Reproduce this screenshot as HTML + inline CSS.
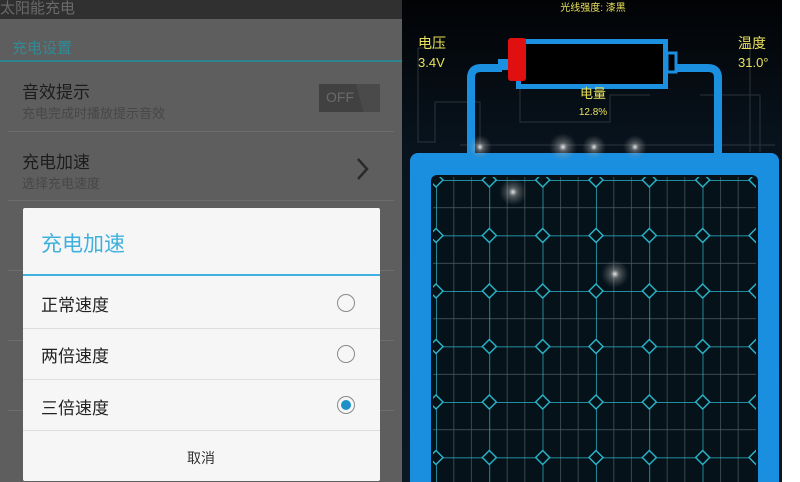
<!DOCTYPE html>
<html><head><meta charset="utf-8"><style>
*{margin:0;padding:0;box-sizing:border-box}
body{width:800px;height:482px;overflow:hidden;background:#fff;position:relative;font-family:"Liberation Sans","Noto Sans CJK SC",sans-serif}
#left{position:absolute;left:0;top:0;width:402px;height:482px;background:#5e5e5e}
.t{position:absolute;white-space:nowrap}
.sep{position:absolute;left:8px;width:386px;height:1px;background:#6e6e6e}
#dlg{position:absolute;left:23px;top:208px;width:357px;height:273px;background:#f6f6f6;border-radius:2px}
.row{position:absolute;left:0;width:357px;height:1px;background:#dedede}
.radio{position:absolute;left:314px;width:18px;height:18px;border:1.5px solid #8a8a8a;border-radius:50%}
</style></head><body>
<div id="left">
 <div style="position:absolute;left:0;top:0;width:402px;height:19px;background:#303030"></div>
 <div class="t" style="left:0;top:-3px;font-size:15px;color:#6a6a6a">太阳能充电</div>
 <div class="t" style="left:12px;top:37px;font-size:15px;color:#2f8b96">充电设置</div>
 <div style="position:absolute;left:0;top:60px;width:402px;height:2px;background:#2c8590"></div>
 <div class="t" style="left:22px;top:78px;font-size:17px;color:#1c1c1c">音效提示</div>
 <div class="t" style="left:22px;top:103px;font-size:13px;color:#474747">充电完成时播放提示音效</div>
 <div style="position:absolute;left:319px;top:84px;width:61px;height:28px;background:#414141"></div>
 <div style="position:absolute;left:350px;top:84px;width:30px;height:28px;background:#4a4a4a;clip-path:polygon(20% 0,100% 0,100% 100%,45% 100%)"></div>
 <div class="t" style="left:326px;top:89px;font-size:14px;color:#6a6a6a">OFF</div>
 <div class="sep" style="top:131px"></div>
 <div class="t" style="left:22px;top:148px;font-size:17px;color:#1c1c1c">充电加速</div>
 <div class="t" style="left:22px;top:173px;font-size:13px;color:#474747">选择充电速度</div>
 <svg style="position:absolute;left:355px;top:156px" width="16" height="26"><path d="M3 3 L12 13 L3 23" fill="none" stroke="#2a2a2a" stroke-width="2.5"/></svg>
 <div class="sep" style="top:200px"></div>
 <div class="sep" style="top:270px"></div>
 <div class="sep" style="top:340px"></div>
 <div class="sep" style="top:410px"></div>
 <div id="dlg">
  <div class="t" style="left:18px;top:20px;font-size:21px;color:#3fb1dc">充电加速</div>
  <div style="position:absolute;left:0;top:66px;width:357px;height:2px;background:#3fb1dc"></div>
  <div class="t" style="left:18px;top:83px;font-size:17px;color:#222">正常速度</div>
  <div class="radio" style="top:86px"></div>
  <div class="row" style="top:120px"></div>
  <div class="t" style="left:18px;top:134px;font-size:17px;color:#222">两倍速度</div>
  <div class="radio" style="top:137px"></div>
  <div class="row" style="top:171px"></div>
  <div class="t" style="left:18px;top:186px;font-size:17px;color:#222">三倍速度</div>
  <div class="radio" style="top:188px;border-color:#8a8a8a"><div style="position:absolute;left:2.5px;top:2.5px;width:10px;height:10px;border-radius:50%;background:#1c8fc8"></div></div>
  <div class="row" style="top:222px"></div>
  <div class="t" style="left:164px;top:240px;font-size:14px;color:#333">取消</div>
 </div>
</div>
<svg style="position:absolute;left:402px;top:0" width="380" height="482" viewBox="402 0 380 482">
 <defs>
  <linearGradient id="bg" x1="0" y1="0" x2="0" y2="1"><stop offset="0" stop-color="#020305"/><stop offset="0.3" stop-color="#08131d"/><stop offset="1" stop-color="#0a1824"/></linearGradient>
  <pattern id="grid" x="436" y="180" width="53.33" height="55.5" patternUnits="userSpaceOnUse">
   <g stroke="#8a969c" stroke-width="0.7" opacity="0.55">
    <line x1="17.8" y1="0" x2="17.8" y2="55.5"/><line x1="35.5" y1="0" x2="35.5" y2="55.5"/>
    <line x1="0" y1="27.75" x2="53.33" y2="27.75"/>
   </g>
   <g stroke="#2ab8cc" stroke-width="1.4" fill="#05121a">
    <line x1="0" y1="0" x2="0" y2="55.5"/><line x1="0" y1="0" x2="53.33" y2="0"/>
    <path d="M0 -7 L7 0 L0 7 L-7 0Z"/><path d="M53.33 -7 L60.33 0 L53.33 7 L46.33 0Z"/>
    <path d="M0 48.5 L7 55.5 L0 62.5 L-7 55.5Z"/><path d="M53.33 48.5 L60.33 55.5 L53.33 62.5 L46.33 55.5Z"/>
   </g>
  </pattern>
  <radialGradient id="glow"><stop offset="0" stop-color="#fff" stop-opacity="0.9"/><stop offset="0.3" stop-color="#ccc" stop-opacity="0.4"/><stop offset="1" stop-color="#888" stop-opacity="0"/></radialGradient>
 </defs>
 <rect x="402" y="0" width="380" height="482" fill="url(#bg)"/>
 <g fill="none" stroke="#2a343c" stroke-width="1">
  <path d="M418 48 H440 M418 48 V142 H435 V102 H480 V152"/>
  <path d="M520 88 V122 H610 V95 H650"/>
  <path d="M700 95 H760 V152 M750 48 V152"/>
  <path d="M460 145 H775"/>
 </g>
 <text x="593" y="11" font-size="10" fill="#e8e05a" text-anchor="middle" font-family="Liberation Sans,Noto Sans CJK SC,sans-serif">光线强度: 漆黑</text>
 <text x="418" y="48" font-size="14" fill="#e8e05a" font-family="Liberation Sans,Noto Sans CJK SC,sans-serif">电压</text>
 <text x="418" y="67" font-size="13" fill="#e8e05a" font-family="Liberation Sans,sans-serif">3.4V</text>
 <text x="738" y="48" font-size="14" fill="#e8e05a" font-family="Liberation Sans,Noto Sans CJK SC,sans-serif">温度</text>
 <text x="738" y="67" font-size="13" fill="#e8e05a" font-family="Liberation Sans,sans-serif">31.0°</text>
 <path d="M502 68 H481 Q471 68 471 78 V156 M677 68 H708 Q718 68 718 78 V156" fill="none" stroke="#1b8fe0" stroke-width="8"/>
 <rect x="518.5" y="41.5" width="147" height="45" fill="#000" stroke="#1b8fe0" stroke-width="5"/>
 <rect x="667" y="53" width="9" height="19" fill="#000" stroke="#1b8fe0" stroke-width="3"/>
 <rect x="498" y="59" width="12" height="11" fill="#1b8fe0"/>
 <rect x="508" y="38" width="18" height="43" rx="3" fill="#e01010"/>
 <text x="593" y="98" font-size="13" fill="#e8e05a" text-anchor="middle" font-family="Liberation Sans,Noto Sans CJK SC,sans-serif">电量</text>
 <text x="593" y="115" font-size="10" fill="#e8e05a" text-anchor="middle" font-family="Liberation Sans,sans-serif">12.8%</text>
 <rect x="410" y="153" width="369" height="340" rx="8" fill="#1a8fe0"/>
 <rect x="431" y="175" width="327" height="320" rx="6" fill="#05121a"/>
 <rect x="433" y="177" width="323" height="310" fill="url(#grid)"/>
 <circle cx="480" cy="147" r="12" fill="url(#glow)"/>
 <circle cx="563" cy="147" r="14" fill="url(#glow)"/>
 <circle cx="594" cy="147" r="12" fill="url(#glow)"/>
 <circle cx="635" cy="147" r="12" fill="url(#glow)"/>
 <circle cx="513" cy="192" r="14" fill="url(#glow)"/>
 <circle cx="615" cy="274" r="14" fill="url(#glow)"/>
</svg>
</body></html>
